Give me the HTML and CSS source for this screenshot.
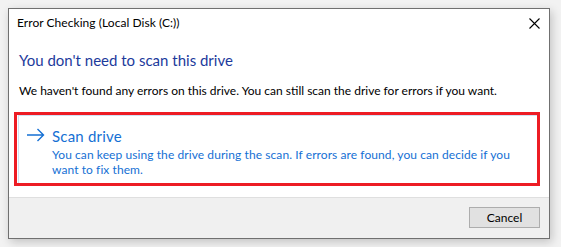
FILE: index.html
```html
<!DOCTYPE html>
<html lang="en">
<head>
<meta charset="utf-8">
<title>Error Checking</title>
<link rel="stylesheet" href="styles.css">
</head>
<body>
<div class="window">
  <div class="main">
    <div class="titlebar">
      <span class="title">Error Checking (Local Disk (C:))</span>
      <svg class="close" width="11" height="11" viewBox="0 0 11 11"><path d="M0.5 0.5 L10.5 10.5 M10.5 0.5 L0.5 10.5" stroke="#000" stroke-width="1.1" fill="none"/></svg>
    </div>
    <div class="content">
      <h1 class="heading">You don't need to scan this drive</h1>
      <p class="message">We haven't found any errors on this drive. You can still scan the drive for errors if you want.</p>
      <div class="highlight">
        <div class="cmdlink">
          <svg class="arrow" width="18" height="14" viewBox="0 0 18 14"><path d="M0 7 H16.5 M10.5 1 L16.5 7 L10.5 13" stroke="#1570d4" stroke-width="1.4" fill="none"/></svg>
          <div class="cmdtext">
            <div class="cmdtitle">Scan drive</div>
            <div class="cmddesc">You can keep using the drive during the scan. If errors are found, you can decide if you want to fix them.</div>
          </div>
        </div>
      </div>
    </div>
  </div>
  <div class="footer">
    <button class="btn">Cancel</button>
  </div>
</div>
</body>
</html>
```

FILE: styles.css
```css
html, body {
  margin: 0;
  padding: 0;
}
body {
  background: #f2f2f2;
  width: 561px;
  height: 247px;
  overflow: hidden;
  font-family: Lato, "Noto Sans", sans-serif;
}
.window {
  box-sizing: border-box;
  margin: 8px 0 0 8px;
  width: 542px;
  height: 231px;
  border: 1px solid #707070;
  background: #fff;
  box-shadow: 2px 3px 9px rgba(0, 0, 0, 0.2);
  display: flex;
  flex-direction: column;
}
.main {
  height: 188px;
  display: flex;
  flex-direction: column;
}
.titlebar {
  display: flex;
  justify-content: space-between;
  align-items: flex-start;
  padding: 0 9px 0 8px;
}
.title {
  margin-top: 6px;
  font-size: 12px;
  line-height: 16px;
  letter-spacing: 0.05px;
  color: #000;
}
.close {
  margin-top: 9px;
}
.content {
  padding: 0 9px 0 10px;
}
.heading {
  margin: 19px 0 0 0;
  font-size: 15px;
  line-height: 20px;
  font-weight: normal;
  color: #1c3a9c;
}
.message {
  margin: 13px 0 0 0;
  font-size: 12px;
  line-height: 16px;
  color: #000;
}
.highlight {
  margin: 13px 0 0 -5px;
  width: 526px;
  height: 74px;
  box-sizing: border-box;
  border: 3px solid #ed1c24;
}
.cmdlink {
  box-sizing: border-box;
  height: 68px;
  border-top: 1px solid #cfe2f5;
  border-left: 1px solid #cfe2f5;
  margin-left: 1px;
  display: flex;
  align-items: flex-start;
  padding: 10px 0 0 8px;
}
.arrow {
  margin-top: 2px;
  flex: none;
}
.cmdtext {
  margin-left: 7px;
  width: 468px;
  color: #1570d4;
}
.cmdtitle {
  font-size: 15px;
  line-height: 20px;
  letter-spacing: 0.2px;
}
.cmddesc {
  margin-top: 1px;
  font-size: 12px;
  line-height: 15px;
  letter-spacing: 0.08px;
}
.footer {
  flex: 1;
  border-top: 1px solid #dfdfdf;
  background: #f0f0f0;
  display: flex;
  justify-content: flex-end;
  align-items: flex-start;
  padding: 9px 9px 0 0;
}
.btn {
  box-sizing: border-box;
  width: 71px;
  height: 21px;
  background: #e1e1e1;
  border: 1px solid #adadad;
  border-radius: 0;
  font-family: Lato, "Noto Sans", sans-serif;
  font-size: 12px;
  color: #000;
  padding: 0;
}
```
